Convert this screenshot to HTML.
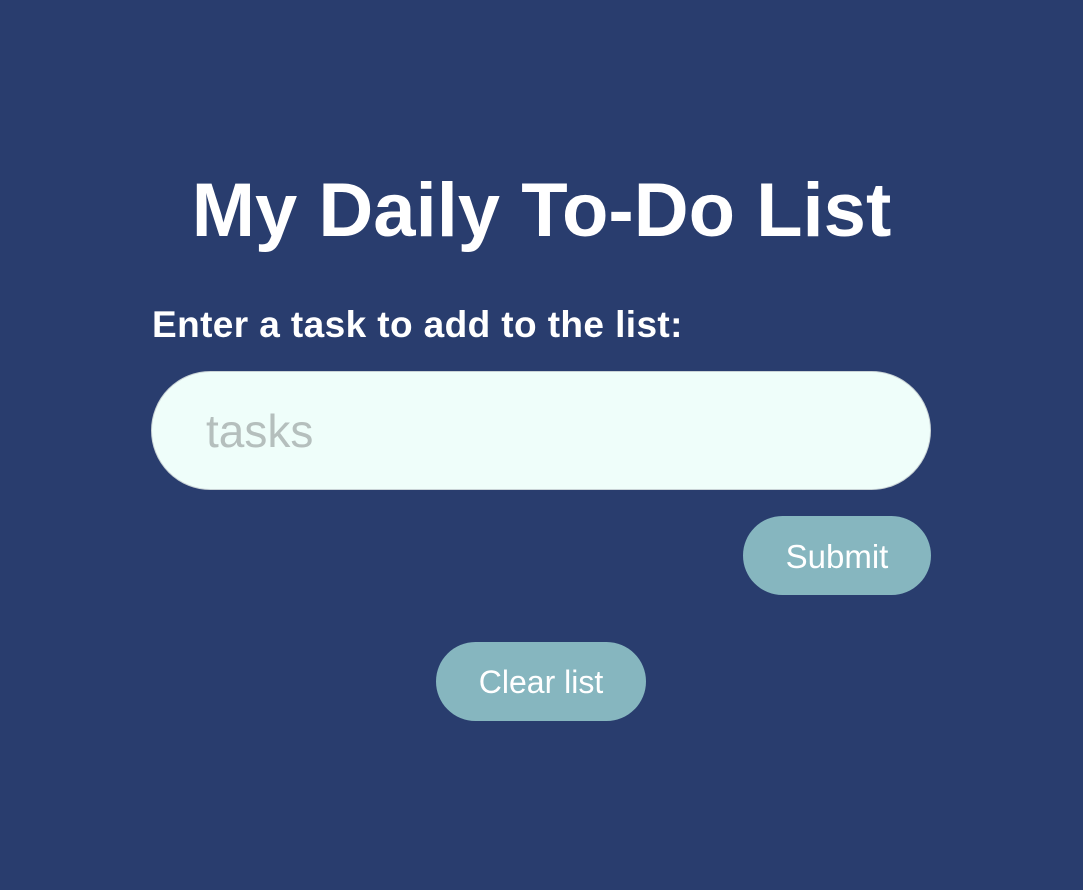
<!DOCTYPE html>
<html><head><style>
html,body{margin:0;padding:0;width:1083px;height:890px;background:#293d6e;overflow:hidden;font-family:"Liberation Sans",sans-serif;}
.t{position:absolute;left:0;width:1083px;top:166px;text-align:center;color:#fff;font-weight:bold;font-size:76px;line-height:90px;letter-spacing:0px;}
.l{position:absolute;left:152px;top:304px;color:#fff;font-weight:bold;font-size:37px;line-height:42px;letter-spacing:0.4px;}
.in{position:absolute;left:151px;top:371px;width:778px;height:117px;border:1px solid #c9d3d6;border-radius:60px;background:#effefa;}
.in span{position:absolute;left:54px;top:34px;font-size:46px;line-height:50px;color:#b5bfbd;}
.b{position:absolute;background:#86b6bf;border-radius:40px;color:#fff;text-align:center;line-height:81px;height:79px;}
</style></head><body>
<div class="t">My Daily To-Do List</div>
<div class="l">Enter a task to add to the list:</div>
<div class="in"><span>tasks</span></div>
<div class="b" style="left:743px;top:516px;width:188px;font-size:33px;">Submit</div>
<div class="b" style="left:436px;top:642px;width:210px;font-size:32px;">Clear list</div>
</body></html>
